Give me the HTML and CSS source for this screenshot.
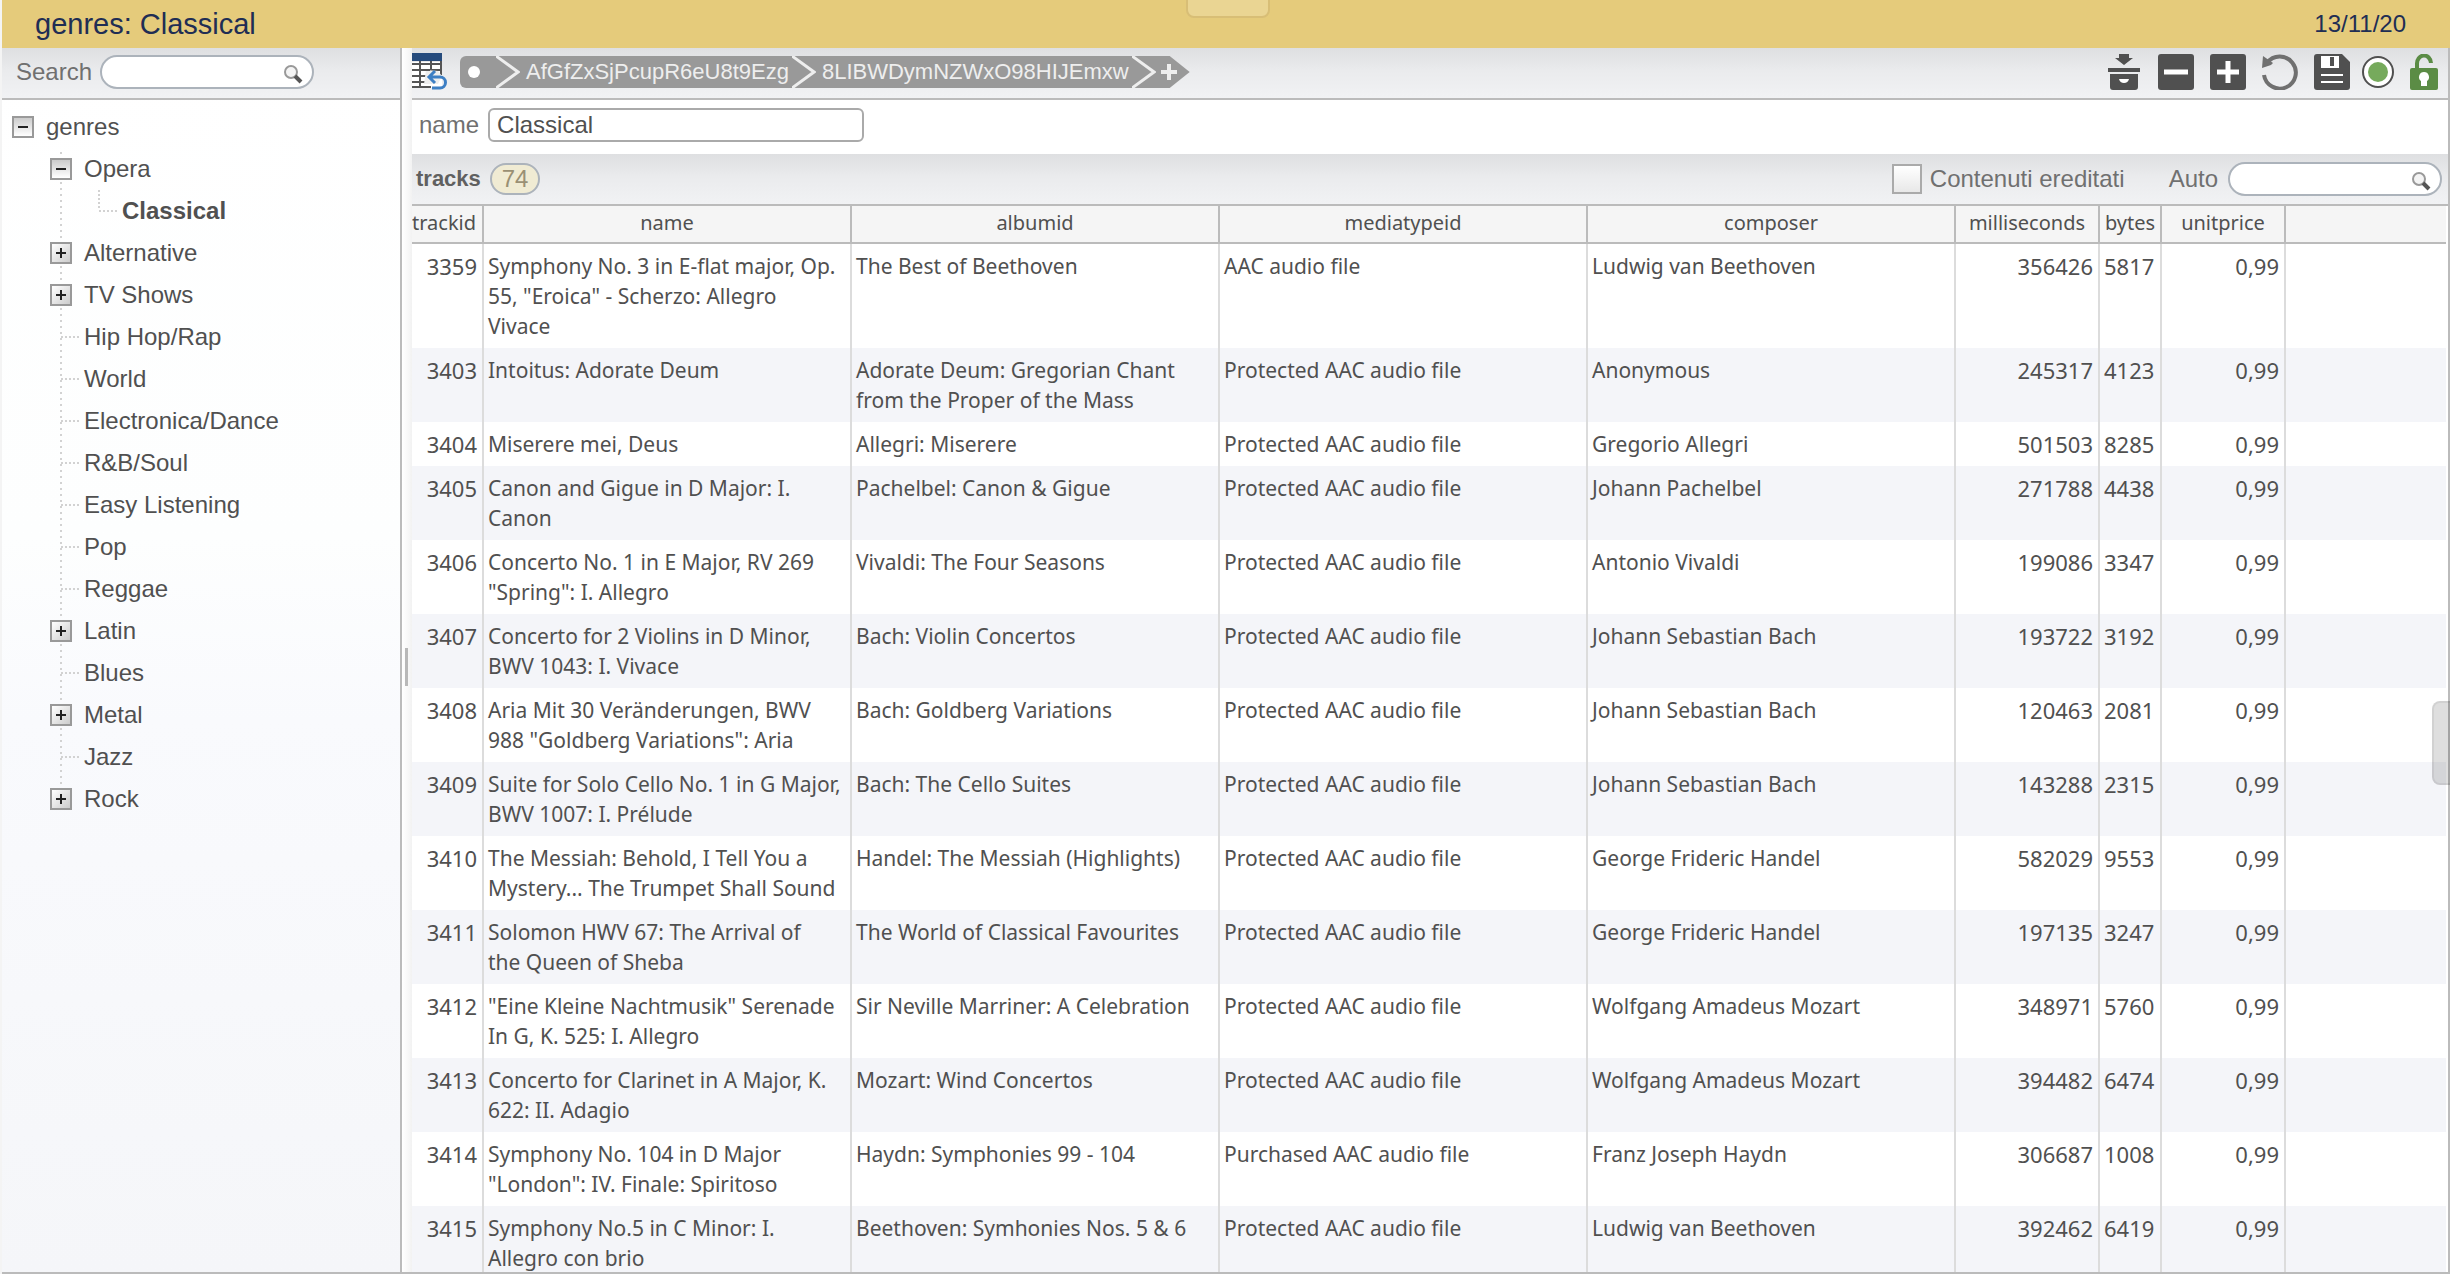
FILE: index.html
```html
<!DOCTYPE html>
<html lang="it">

<head>
    <meta charset="UTF-8">
    <meta name="viewport" content="width=device-width, initial-scale=1.0">
    <title>genres: Classical</title>
    <link rel="stylesheet" href="styles.css">
</head>

<body>
    <header class="titlebar">
        <h1>genres: Classical</h1>
        <time datetime="2020-11-13">13/11/20</time>
        <div class="pull-tab"></div>
    </header>
    <div class="workspace">
        <aside class="sidebar">
            <div class="bar">
                <label for="treeSearch">Search</label>
                <div class="search">
                    <input type="text" id="treeSearch">
                    <svg viewBox="0 0 20 20"><circle cx="8" cy="8" r="6" fill="#f4f4f4" stroke="#999" stroke-width="2"/><path d="M12 12l6 6" stroke="#555" stroke-width="4"/></svg>
                </div>
            </div>
            <ul class="tree">
                <li>
                    <div class="node"><button class="toggle open" title="Close"></button>genres</div>
                    <ul class="branch">
                        <li>
                            <div class="node"><button class="toggle open" title="Close"></button>Opera</div>
                            <ul class="twig">
                                <li><div class="node leaf selected">Classical</div></li>
                            </ul>
                        </li>
                        <li><div class="node"><button class="toggle" title="Open"></button>Alternative</div></li>
                        <li><div class="node"><button class="toggle" title="Open"></button>TV Shows</div></li>
                        <li><div class="node leaf">Hip Hop/Rap</div></li>
                        <li><div class="node leaf">World</div></li>
                        <li><div class="node leaf">Electronica/Dance</div></li>
                        <li><div class="node leaf">R&amp;B/Soul</div></li>
                        <li><div class="node leaf">Easy Listening</div></li>
                        <li><div class="node leaf">Pop</div></li>
                        <li><div class="node leaf">Reggae</div></li>
                        <li><div class="node"><button class="toggle" title="Open"></button>Latin</div></li>
                        <li><div class="node leaf">Blues</div></li>
                        <li><div class="node"><button class="toggle" title="Open"></button>Metal</div></li>
                        <li><div class="node leaf">Jazz</div></li>
                        <li><div class="node"><button class="toggle" title="Open"></button>Rock</div></li>
                    </ul>
                </li>
            </ul>
        </aside>
        <div class="splitter"></div>
        <main>
            <div class="bar toolbar">
                <button class="table-icon" title="Table">
                    <svg viewBox="0 0 36 38">
                        <path d="M0 9h30v26H0z" fill="#fff"/>
                        <path d="M0 0h30v8H0z" fill="#264b7c"/>
                        <path d="M0 11h30M0 17h30M0 23h18M0 29h18M0 34h19M8 8v27M19 8v13M29 8v14" stroke="#555" stroke-width="2" fill="none"/>
                        <path d="M14 17l-2 14h14l4-8-4-5z" fill="#eee"/>
                        <path d="M0 11h30M0 17h18M8 8v27" stroke="#555" stroke-width="2" fill="none"/>
                        <path d="M23 18l-6 6 6 6M17 24h11a5 5 0 0 1 0 11h-8" stroke="#3d7fc4" stroke-width="3" fill="none"/>
                    </svg>
                </button>
                <nav class="crumbs">
                    <a href="#" title="Root"><span class="dot"></span></a>
                    <svg class="chevron" viewBox="0 0 24 32"><path d="M0 0l22 16L0 32"/></svg>
                    <a href="#">AfGfZxSjPcupR6eU8t9Ezg</a>
                    <svg class="chevron" viewBox="0 0 24 32"><path d="M0 0l22 16L0 32"/></svg>
                    <a href="#">8LIBWDymNZWxO98HIJEmxw</a>
                    <svg class="chevron" viewBox="0 0 24 32"><path d="M0 0l22 16L0 32"/></svg>
                    <button class="crumb-add" title="Add"><svg viewBox="0 0 34 32"><path d="M5 16h16M13 8v16" stroke="#eee" stroke-width="4"/></svg></button>
                </nav>
                <div class="actions">
                    <button title="Archive">
                        <svg viewBox="0 0 36 36" fill="#505050"><path d="M13 0h10v4h4l-9 7-9-7h4zM2 14h32v4H2zM4 20h28v13q0 3-3 3H7q-3 0-3-3z"/><path d="M13 25h10q-1 4-5 4t-5-4z" fill="#fff"/></svg>
                    </button>
                    <button title="Delete">
                        <svg viewBox="0 0 36 36"><rect width="36" height="36" rx="3" fill="#505050"/><path d="M6 18h24" stroke="#fff" stroke-width="5"/></svg>
                    </button>
                    <button title="Add">
                        <svg viewBox="0 0 36 36"><rect width="36" height="36" rx="3" fill="#505050"/><path d="M7 18h22M18 7v22" stroke="#fff" stroke-width="5"/></svg>
                    </button>
                    <button title="Revert">
                        <svg viewBox="0 0 36 36"><path d="M5 9A16 16 0 1 1 2 21" stroke="#707070" stroke-width="4" fill="none"/><path d="M1 2l10 7-2 2-9 3z" fill="#707070"/></svg>
                    </button>
                    <button title="Save">
                        <svg viewBox="0 0 36 36"><path d="M3 0h25l8 8v25q0 3-3 3H3q-3 0-3-3V3q0-3 3-3z" fill="#505050"/><path d="M7 2h18v12H7z" fill="#fff"/><path d="M16 3h4v9h-4z" fill="#505050"/><path d="M7 21h22M7 28h22" stroke="#fff" stroke-width="2"/></svg>
                    </button>
                    <button class="status" title="Status">
                        <svg viewBox="0 0 32 32"><circle cx="16" cy="16" r="15" fill="#fff" stroke="#505050" stroke-width="2"/><circle cx="16" cy="16" r="10" fill="#76aa5c"/></svg>
                    </button>
                    <button class="lock" title="Lock">
                        <svg viewBox="0 0 28 36"><path d="M7 15V10a7 8 0 0 1 14-1" stroke="#5b8c45" stroke-width="4" fill="none"/><rect y="14" width="28" height="22" rx="2" fill="#5b8c45"/><path d="M14 18a5 5 0 0 1 3 9v5h-6v-5a5 5 0 0 1 3-9z" fill="#fff"/></svg>
                    </button>
                </div>
            </div>
            <form class="record">
                <label for="genreName">name</label>
                <input type="text" id="genreName" value="Classical">
            </form>
            <div class="bar tracks-bar">
                <h2>tracks</h2>
                <span class="count">74</span>
                <input type="checkbox" id="inherited">
                <label for="inherited" class="inherited-label">Contenuti ereditati</label>
                <label for="trackSearch">Auto</label>
                <div class="search">
                    <input type="text" id="trackSearch">
                    <svg viewBox="0 0 20 20"><circle cx="8" cy="8" r="6" fill="#f4f4f4" stroke="#999" stroke-width="2"/><path d="M12 12l6 6" stroke="#555" stroke-width="4"/></svg>
                </div>
            </div>
            <div class="grid">
                <table>
                    <colgroup>
                        <col class="col-id">
                        <col class="col-text" span="4">
                        <col class="col-ms">
                        <col class="col-bytes">
                        <col class="col-price">
                        <col>
                    </colgroup>
                    <thead>
                        <tr><th>trackid</th><th>name</th><th>albumid</th><th>mediatypeid</th><th>composer</th><th>milliseconds</th><th>bytes</th><th>unitprice</th><th></th></tr>
                    </thead>
                    <tbody>
                        <tr><td>3359</td><td>Symphony No. 3 in E-flat major, Op. 55, "Eroica" - Scherzo: Allegro<br>Vivace</td><td>The Best of Beethoven</td><td>AAC audio file</td><td>Ludwig van Beethoven</td><td>356426</td><td>5817</td><td>0,99</td><td></td></tr>
                        <tr><td>3403</td><td>Intoitus: Adorate Deum</td><td>Adorate Deum: Gregorian Chant from the Proper of the Mass</td><td>Protected AAC audio file</td><td>Anonymous</td><td>245317</td><td>4123</td><td>0,99</td><td></td></tr>
                        <tr><td>3404</td><td>Miserere mei, Deus</td><td>Allegri: Miserere</td><td>Protected AAC audio file</td><td>Gregorio Allegri</td><td>501503</td><td>8285</td><td>0,99</td><td></td></tr>
                        <tr><td>3405</td><td>Canon and Gigue in D Major: I. Canon</td><td>Pachelbel: Canon &amp; Gigue</td><td>Protected AAC audio file</td><td>Johann Pachelbel</td><td>271788</td><td>4438</td><td>0,99</td><td></td></tr>
                        <tr><td>3406</td><td>Concerto No. 1 in E Major, RV 269 "Spring": I. Allegro</td><td>Vivaldi: The Four Seasons</td><td>Protected AAC audio file</td><td>Antonio Vivaldi</td><td>199086</td><td>3347</td><td>0,99</td><td></td></tr>
                        <tr><td>3407</td><td>Concerto for 2 Violins in D Minor, BWV 1043: I. Vivace</td><td>Bach: Violin Concertos</td><td>Protected AAC audio file</td><td>Johann Sebastian Bach</td><td>193722</td><td>3192</td><td>0,99</td><td></td></tr>
                        <tr><td>3408</td><td>Aria Mit 30 Veränderungen, BWV 988 "Goldberg Variations": Aria</td><td>Bach: Goldberg Variations</td><td>Protected AAC audio file</td><td>Johann Sebastian Bach</td><td>120463</td><td>2081</td><td>0,99</td><td></td></tr>
                        <tr><td>3409</td><td>Suite for Solo Cello No. 1 in G Major, BWV 1007: I. Prélude</td><td>Bach: The Cello Suites</td><td>Protected AAC audio file</td><td>Johann Sebastian Bach</td><td>143288</td><td>2315</td><td>0,99</td><td></td></tr>
                        <tr><td>3410</td><td>The Messiah: Behold, I Tell You a Mystery... The Trumpet Shall Sound</td><td>Handel: The Messiah (Highlights)</td><td>Protected AAC audio file</td><td>George Frideric Handel</td><td>582029</td><td>9553</td><td>0,99</td><td></td></tr>
                        <tr><td>3411</td><td>Solomon HWV 67: The Arrival of<br>the Queen of Sheba</td><td>The World of Classical Favourites</td><td>Protected AAC audio file</td><td>George Frideric Handel</td><td>197135</td><td>3247</td><td>0,99</td><td></td></tr>
                        <tr><td>3412</td><td>"Eine Kleine Nachtmusik" Serenade In G, K. 525: I. Allegro</td><td>Sir Neville Marriner: A Celebration</td><td>Protected AAC audio file</td><td>Wolfgang Amadeus Mozart</td><td>348971</td><td>5760</td><td>0,99</td><td></td></tr>
                        <tr><td>3413</td><td>Concerto for Clarinet in A Major, K. 622: II. Adagio</td><td>Mozart: Wind Concertos</td><td>Protected AAC audio file</td><td>Wolfgang Amadeus Mozart</td><td>394482</td><td>6474</td><td>0,99</td><td></td></tr>
                        <tr><td>3414</td><td>Symphony No. 104 in D Major "London": IV. Finale: Spiritoso</td><td>Haydn: Symphonies 99 - 104</td><td>Purchased AAC audio file</td><td>Franz Joseph Haydn</td><td>306687</td><td>1008</td><td>0,99</td><td></td></tr>
                        <tr><td>3415</td><td>Symphony No.5 in C Minor: I. Allegro con brio</td><td>Beethoven: Symhonies Nos. 5 &amp; 6</td><td>Protected AAC audio file</td><td>Ludwig van Beethoven</td><td>392462</td><td>6419</td><td>0,99</td><td></td></tr>
                    </tbody>
                </table>
            </div>
        </main>
    </div>
    <div class="side-tab"></div>
</body>

</html>
```
FILE: styles.css
```css
* {
    box-sizing: border-box;
}

body {
    margin: 0;
    height: 100vh;
    overflow: hidden;
    display: flex;
    flex-direction: column;
    font-family: "Liberation Sans", Arial, sans-serif;
    font-size: 24px;
    color: #505050;
    background-color: #f4f4f4;
    padding-left: 2px;
}

button {
    border: 0;
    padding: 0;
    background: none;
}

svg {
    display: block;
}

h1,
h2 {
    margin: 0;
}

.titlebar {
    position: relative;
    flex: none;
    height: 48px;
    padding: 0 44px 0 33px;
    display: flex;
    align-items: center;
    justify-content: space-between;
    background-color: #e5cb7b;
    color: #202d54;
}

h1 {
    font-size: 29px;
    font-weight: normal;
}

.pull-tab {
    position: absolute;
    top: -2px;
    left: calc(50% - 40px);
    width: 84px;
    height: 20px;
    border: 2px solid #d8be76;
    border-radius: 0 0 8px 8px;
    background-color: #ead593;
}

.workspace {
    flex: 1;
    min-height: 0;
    display: flex;
    border-bottom: 2px solid #bbb;
}

.bar {
    flex: none;
    height: 52px;
    display: flex;
    align-items: center;
    padding-bottom: 2px;
    border-bottom: 2px solid #bbb;
    background-image: linear-gradient(#dedfe1, #eaebed 45%, #f1f2f4);
    color: #707070;
}

.search {
    position: relative;
    width: 214px;
}

.search input {
    display: block;
    width: 100%;
    height: 34px;
    padding: 0 40px 0 14px;
    border: 2px solid #acb3bb;
    border-radius: 17px;
    font: inherit;
}

.search svg {
    position: absolute;
    top: 9px;
    right: 11px;
    width: 20px;
}

/* sidebar */
.sidebar {
    flex: none;
    width: 400px;
    border-right: 2px solid #bbb;
    background-image: linear-gradient(#fff, #fdfefe 40%, #f9fafd 55%, #f5f6f9);
}

.sidebar .bar {
    padding-left: 14px;
    gap: 8px;
}

.tree,
.tree ul {
    list-style: none;
    margin: 0;
    padding: 0;
}

.tree {
    padding: 6px 0 0 10px;
}

.tree ul {
    padding-left: 38px;
}

.node {
    height: 42px;
    display: flex;
    align-items: center;
}

.branch {
    background: repeating-linear-gradient(transparent 0 4px, #d2d2d2 4px 6px) 48px 0 / 2px calc(100% - 32px) no-repeat;
}

.twig {
    background: repeating-linear-gradient(#d2d2d2 0 2px, transparent 2px 4px) 48px 0 / 2px 20px no-repeat;
}

.leaf::before {
    content: "";
    width: 18px;
    height: 2px;
    margin: 0 5px 0 11px;
    background: repeating-linear-gradient(90deg, #d2d2d2 0 2px, transparent 2px 4px);
}

.selected {
    font-weight: bold;
}

.toggle {
    width: 22px;
    height: 22px;
    margin-right: 12px;
    border: 2px solid #999;
    background:
        linear-gradient(#222, #222) center / 10px 2px no-repeat,
        linear-gradient(#222, #222) center / 2px 10px no-repeat,
        linear-gradient(135deg, #fff, #ccc);
}

.toggle.open {
    background:
        linear-gradient(#222, #222) center / 10px 2px no-repeat,
        linear-gradient(#ccc, #fff);
}

.splitter {
    flex: none;
    width: 10px;
    display: flex;
    align-items: center;
    padding: 14px 0 0 3px;
    background-image: linear-gradient(90deg, #fff, #f2f2f2);
}

.splitter::before {
    content: "";
    width: 3px;
    height: 38px;
    background-color: #b8b8b8;
}

/* record pane */
main {
    flex: 1;
    min-width: 0;
    display: flex;
    flex-direction: column;
    border-right: 2px solid #bbb;
    background-color: #fff;
}

.table-icon svg {
    width: 36px;
    height: 38px;
}

.crumbs {
    height: 32px;
    margin-left: 12px;
    display: flex;
    font-size: 22px;
    line-height: 32px;
}

.crumbs a {
    padding: 0 3px 0 6px;
    background-color: #999;
    color: #eee;
    text-decoration: none;
}

.crumbs a:first-child {
    width: 36px;
    display: flex;
    align-items: center;
    padding-left: 8px;
    border-radius: 6px 0 0 6px;
}

.dot {
    width: 12px;
    height: 12px;
    border-radius: 50%;
    background-color: #fff;
}

.chevron {
    width: 24px;
    height: 32px;
    background-color: #999;
    fill: none;
    stroke: #eee;
    stroke-width: 3;
}

.crumb-add {
    width: 34px;
    background-color: #999;
    clip-path: polygon(0 0, 14px 0, 100% 50%, 14px 100%, 0 100%);
}

.actions {
    margin-left: auto;
    padding-right: 10px;
    display: flex;
    align-items: center;
    gap: 16px;
}

.actions button {
    width: 36px;
}

.actions .status {
    width: 32px;
    margin-left: -4px;
}

.actions .lock {
    width: 28px;
}

.record {
    flex: none;
    height: 54px;
    padding: 0 0 4px 7px;
    display: flex;
    align-items: center;
    gap: 9px;
    color: #707070;
}

.record input {
    width: 376px;
    height: 34px;
    padding: 0 7px;
    border: 2px solid #aaa;
    border-radius: 6px;
    font: inherit;
    color: #505050;
}

.tracks-bar {
    padding: 0 6px 0 4px;
}

h2 {
    width: 74px;
    font-size: 22px;
    color: #606060;
}

.count {
    width: 50px;
    height: 32px;
    border: 2px solid #acb3bb;
    border-radius: 16px;
    background-color: #f0ebd3;
    color: #9a9074;
    line-height: 28px;
    text-align: center;
}

#inherited {
    appearance: none;
    width: 30px;
    height: 30px;
    margin: 0 8px 0 auto;
    border: 2px solid #aaa;
    background-image: linear-gradient(#fff, #e8e8e8);
}

.inherited-label {
    margin-right: 44px;
}

.tracks-bar .search {
    margin-left: 10px;
}

/* tracks table */
.grid {
    flex: 1;
    min-height: 0;
    overflow: hidden;
    padding-right: 2px;
}

table {
    width: 100%;
    table-layout: fixed;
    border-collapse: separate;
    border-spacing: 0;
    font-family: "Noto Sans", sans-serif;
}

.col-id {
    width: 72px;
}

.col-text {
    width: 368px;
}

.col-ms {
    width: 144px;
}

.col-bytes {
    width: 62px;
}

.col-price {
    width: 124px;
}

th {
    height: 38px;
    padding: 0 4px 2px;
    border-right: 2px solid #bbb;
    border-bottom: 2px solid #bbb;
    background-color: #f5f5f5;
    font-size: 20px;
    font-weight: normal;
    line-height: 30px;
    white-space: nowrap;
}

td {
    padding: 7px 4px;
    border-right: 2px solid #dcdcdc;
    font-size: 21px;
    line-height: 30px;
    vertical-align: top;
}

th:last-child,
td:last-child {
    border-right: 0;
}

th:first-child {
    padding: 0 8px 2px 0;
    text-align: right;
}

tbody tr:nth-child(even) {
    background-color: #f4f5f9;
}

td:first-child,
td:nth-child(6),
td:nth-child(7),
td:nth-child(8) {
    padding-right: 5px;
    font-size: 22px;
    text-align: right;
}

/* long byte counts are cut off at the column edge */
td:nth-child(7) {
    padding-right: 0;
    overflow: hidden;
    text-align: left;
}

.side-tab {
    position: fixed;
    top: 55%;
    right: -2px;
    width: 20px;
    height: 84px;
    border: 2px solid rgba(0, 0, 0, .06);
    border-radius: 8px 0 0 8px;
    background-color: rgba(0, 0, 0, .13);
}
```
